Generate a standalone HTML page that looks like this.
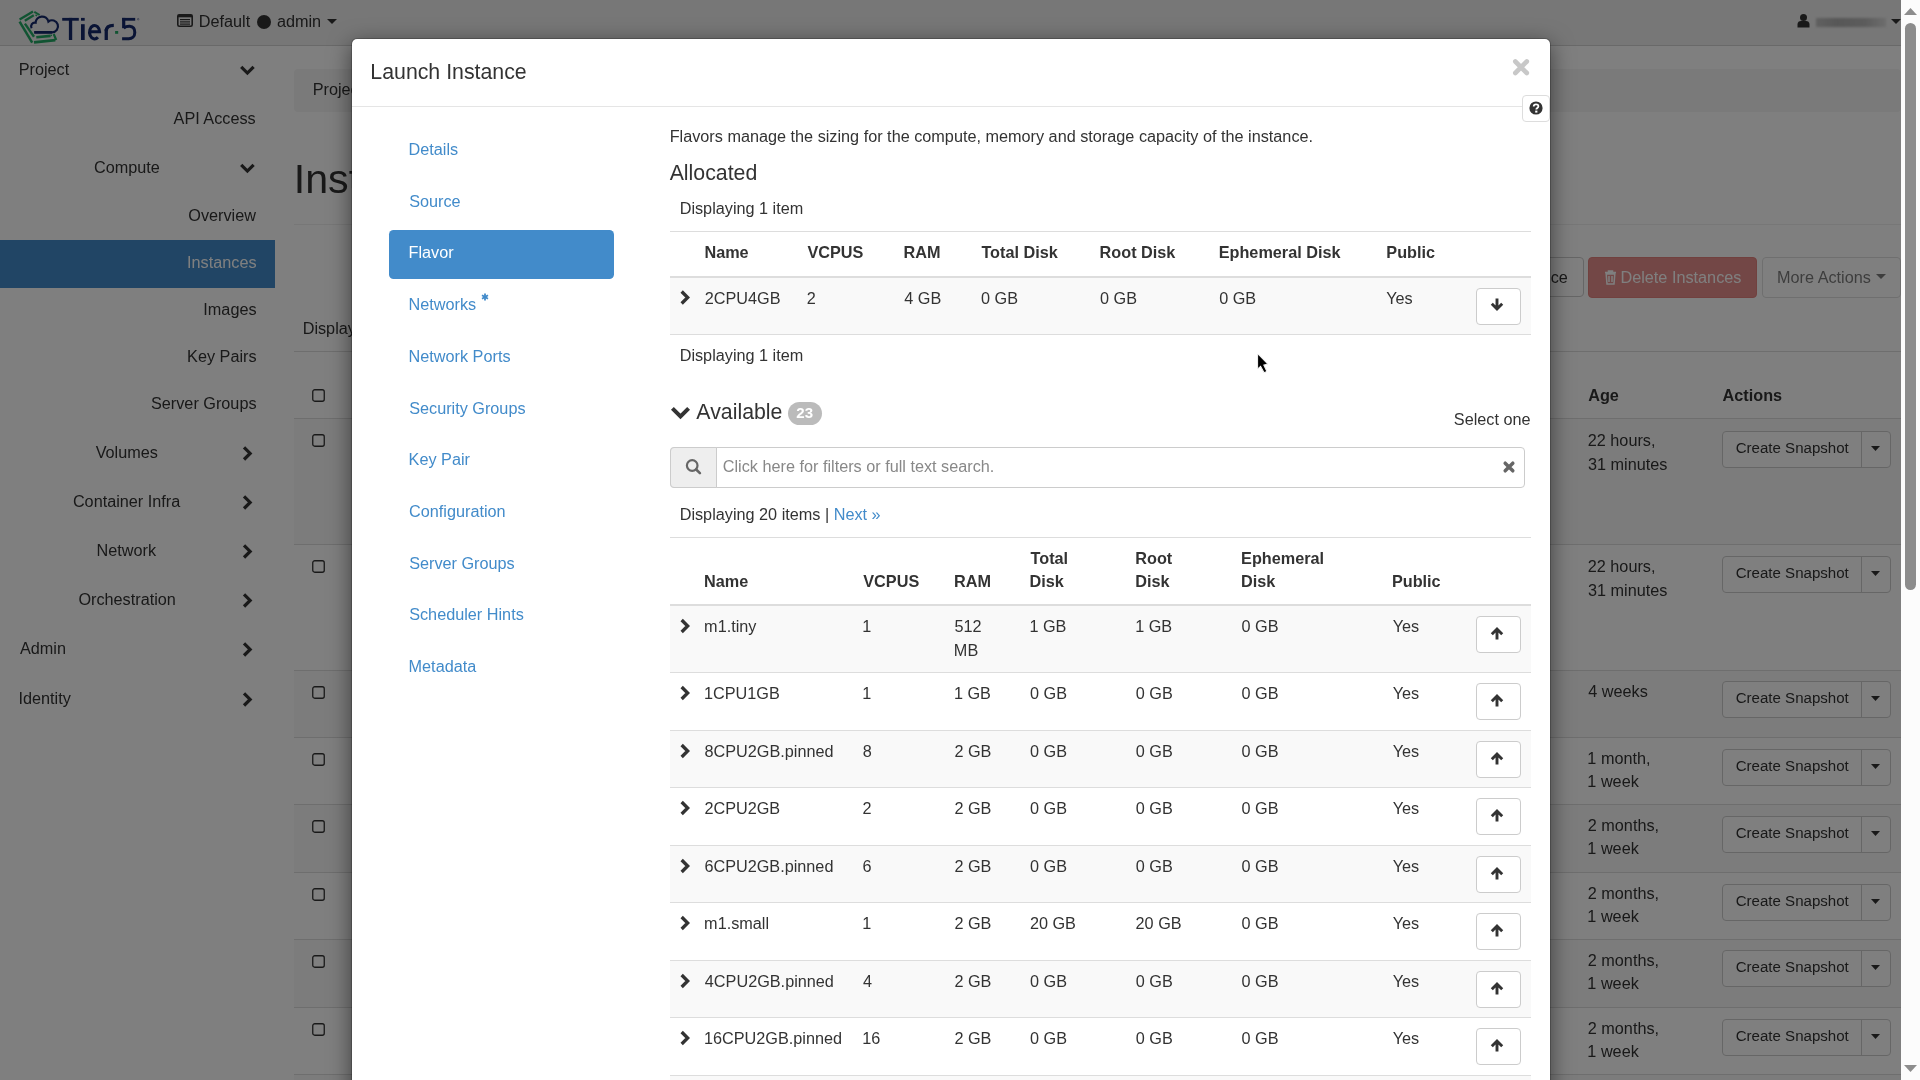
<!DOCTYPE html>
<html><head><meta charset="utf-8"><title>Launch Instance</title>
<style>
html,body{margin:0;padding:0;width:1920px;height:1080px;overflow:hidden;background:#fff}
body{position:relative;font-family:"Liberation Sans",sans-serif;color:#333}
.t{position:absolute;white-space:pre;font-family:"Liberation Sans",sans-serif}
#page,#modal{position:absolute;left:0;top:0;width:1920px;height:1080px;overflow:hidden;will-change:transform}
svg{display:block}
</style></head><body>
<div id="page"><div style="position:absolute;left:0px;top:0px;width:1901px;height:45px;background:#eeeeee"></div>
<div style="position:absolute;left:0px;top:45px;width:1901px;height:1px;background:#d2d2d2"></div>
<svg style="position:absolute;left:0px;top:0px" width="145" height="48" viewBox="0 0 145 48">
<g stroke="#22a864" stroke-linecap="butt" fill="none">
<line x1="19.6" y1="19.4" x2="33" y2="11.6" stroke-width="2.3"/>
<line x1="24.8" y1="20.8" x2="33.8" y2="15.3" stroke-width="2.2"/>
<line x1="34.3" y1="11.8" x2="39.7" y2="15.0" stroke-width="2.0"/>
<line x1="35.5" y1="14.8" x2="37.1" y2="15.8" stroke-width="1.4"/>
<line x1="19.6" y1="21.6" x2="32.2" y2="42.6" stroke-width="2.5"/>
<line x1="24.9" y1="23.6" x2="34.0" y2="36.8" stroke-width="2.4"/>
<line x1="36.3" y1="37.2" x2="50.6" y2="35.9" stroke-width="2.6"/>
<line x1="34" y1="42.4" x2="55.3" y2="40.2" stroke-width="2.7"/>
<line x1="53.7" y1="34" x2="56.2" y2="40" stroke-width="2.2"/>
</g>
<circle cx="51.3" cy="35.4" r="0.8" fill="#22a864"/>
<path d="M34.3,32.3 L52,32.3 A6,6 0 1 0 48.4,21.5 A6.5,6.5 0 0 0 35.6,22.6 A3.8,3.8 0 0 0 31.6,28.2" fill="none" stroke="#14286a" stroke-width="2.2"/>
<line x1="34.3" y1="32.3" x2="52" y2="32.3" stroke="#14286a" stroke-width="2.6"/>
<g fill="#14286a">
<rect x="62.2" y="17.9" width="16.6" height="2.8"/>
<rect x="68.9" y="17.9" width="3.3" height="22.1"/>
<rect x="81" y="17.9" width="3.7" height="2.8"/>
<rect x="81" y="24.2" width="3.7" height="15.8"/>
<rect x="104.6" y="29" width="3.3" height="11"/>
<rect x="122.1" y="17.9" width="13.1" height="2.8"/>
<rect x="122.1" y="17.9" width="3.2" height="10.3"/>
</g>
<g fill="none" stroke="#14286a">
<path d="M89.5,31.7 H99.6 A5.05,6.7 0 1 0 97.9,37.2" stroke-width="3"/>
<path d="M106.25,31 Q106.25,25.3 113.8,25.3" stroke-width="3.3"/>
<path d="M123.7,28 C125.5,26.6 127.8,26.2 129.8,26.3 C133.6,26.6 134.8,29.6 134.8,32.6 C134.8,36.8 131.9,38.7 128.8,38.7 L122.1,38.7" stroke-width="3"/>
</g>
<rect x="115.1" y="31" width="3.1" height="2.8" fill="#22a864"/>
<circle cx="138.2" cy="19.2" r="0.8" fill="none" stroke="#14286a" stroke-width="0.4"/>
</svg>
<svg style="position:absolute;left:177px;top:14px" width="16" height="13" viewBox="0 0 16 13"><rect x="0.8" y="0.8" width="14.4" height="11.4" rx="1.5" fill="none" stroke="#333" stroke-width="1.6"/><rect x="0.8" y="0.8" width="14.4" height="2.5" fill="#333"/><rect x="3" y="5" width="10" height="1.2" fill="#333"/><rect x="3" y="7.3" width="10" height="1.2" fill="#333"/><rect x="3" y="9.5" width="10" height="1.2" fill="#333"/></svg>
<div class="t" style="left:198.77px;top:9px;font-size:16.24px;line-height:24px;color:#333;">Default</div>
<div style="position:absolute;left:257px;top:15px;width:14px;height:14px;background:#333;border-radius:50%"></div>
<div class="t" style="left:276.91px;top:9px;font-size:16.24px;line-height:24px;color:#333;">admin</div>
<svg style="position:absolute;left:327px;top:19px" width="10" height="5" viewBox="0 0 10 5"><polygon points="0,0 10,0 5,5" fill="#333"/></svg>
<svg style="position:absolute;left:1797px;top:14px" width="13" height="14" viewBox="0 0 13 14"><circle cx="6.5" cy="3.6" r="3.5" fill="#333"/><path d="M0.5,13.5 L0.5,10.5 C0.5,8 2,7 4,7 L9,7 C11,7 12.5,8 12.5,10.5 L12.5,13.5 Z" fill="#333"/></svg>
<div style="position:absolute;left:1816px;top:18px;width:70px;height:9px;background:linear-gradient(90deg,#bdbdbd,#a9a9a9 30%,#b3b3b3 70%,#d9d9d9);filter:blur(1.2px);opacity:.9"></div>
<svg style="position:absolute;left:1891px;top:19px" width="10" height="5" viewBox="0 0 10 5"><polygon points="0,0 10,0 5,5" fill="#333"/></svg>
<div style="position:absolute;left:0px;top:240px;width:275px;height:48px;background:#428bca"></div>
<div class="t" style="left:18.67px;top:57px;font-size:16.24px;line-height:24px;color:#333;">Project</div>
<div class="t" style="left:173.56px;top:106px;font-size:16.24px;line-height:24px;color:#333;">API Access</div>
<div class="t" style="left:94.00px;top:155px;font-size:16.24px;line-height:24px;color:#333;">Compute</div>
<div class="t" style="left:188.28px;top:203px;font-size:16.24px;line-height:24px;color:#333;">Overview</div>
<div class="t" style="left:187.08px;top:250px;font-size:16.24px;line-height:24px;color:#fff;">Instances</div>
<div class="t" style="left:203.33px;top:297px;font-size:16.24px;line-height:24px;color:#333;">Images</div>
<div class="t" style="left:187.09px;top:344px;font-size:16.24px;line-height:24px;color:#333;">Key Pairs</div>
<div class="t" style="left:150.99px;top:391px;font-size:16.24px;line-height:24px;color:#333;">Server Groups</div>
<div class="t" style="left:95.67px;top:440px;font-size:16.24px;line-height:24px;color:#333;">Volumes</div>
<div class="t" style="left:72.88px;top:489px;font-size:16.24px;line-height:24px;color:#333;">Container Infra</div>
<div class="t" style="left:96.54px;top:538px;font-size:16.24px;line-height:24px;color:#333;">Network</div>
<div class="t" style="left:78.40px;top:587px;font-size:16.24px;line-height:24px;color:#333;">Orchestration</div>
<div class="t" style="left:19.97px;top:636px;font-size:16.24px;line-height:24px;color:#333;">Admin</div>
<div class="t" style="left:18.50px;top:686px;font-size:16.24px;line-height:24px;color:#333;">Identity</div>
<svg style="position:absolute;left:237px;top:62px" width="21" height="16" viewBox="0 0 21 16"><polyline points="4.20,4.83 10.40,11.03 16.60,4.83" fill="none" stroke="#333" stroke-width="3.2" stroke-linejoin="miter" stroke-linecap="butt"/></svg>
<svg style="position:absolute;left:237px;top:160px" width="21" height="16" viewBox="0 0 21 16"><polyline points="4.20,4.83 10.40,11.03 16.60,4.83" fill="none" stroke="#333" stroke-width="3.2" stroke-linejoin="miter" stroke-linecap="butt"/></svg>
<svg style="position:absolute;left:239px;top:443px" width="16" height="21" viewBox="0 0 16 21"><polyline points="5.03,4.30 11.13,10.40 5.03,16.50" fill="none" stroke="#333" stroke-width="3.2" stroke-linejoin="miter" stroke-linecap="butt"/></svg>
<svg style="position:absolute;left:239px;top:492px" width="16" height="21" viewBox="0 0 16 21"><polyline points="5.03,4.30 11.13,10.40 5.03,16.50" fill="none" stroke="#333" stroke-width="3.2" stroke-linejoin="miter" stroke-linecap="butt"/></svg>
<svg style="position:absolute;left:239px;top:541px" width="16" height="21" viewBox="0 0 16 21"><polyline points="5.03,4.30 11.13,10.40 5.03,16.50" fill="none" stroke="#333" stroke-width="3.2" stroke-linejoin="miter" stroke-linecap="butt"/></svg>
<svg style="position:absolute;left:239px;top:590px" width="16" height="21" viewBox="0 0 16 21"><polyline points="5.03,4.30 11.13,10.40 5.03,16.50" fill="none" stroke="#333" stroke-width="3.2" stroke-linejoin="miter" stroke-linecap="butt"/></svg>
<svg style="position:absolute;left:239px;top:639px" width="16" height="21" viewBox="0 0 16 21"><polyline points="5.03,4.30 11.13,10.40 5.03,16.50" fill="none" stroke="#333" stroke-width="3.2" stroke-linejoin="miter" stroke-linecap="butt"/></svg>
<svg style="position:absolute;left:239px;top:689px" width="16" height="21" viewBox="0 0 16 21"><polyline points="5.03,4.30 11.13,10.40 5.03,16.50" fill="none" stroke="#333" stroke-width="3.2" stroke-linejoin="miter" stroke-linecap="butt"/></svg>
<div style="position:absolute;left:294px;top:69px;width:1607px;height:43px;background:#f5f5f5;border-radius:4px"></div>
<div class="t" style="left:312.67px;top:77px;font-size:16.24px;line-height:24px;color:#333;">Project / Compute / Instances</div>
<div class="t" style="left:293.70px;top:148px;font-size:41.2px;line-height:62px;color:#333;">Instances</div>
<div style="position:absolute;left:294px;top:224px;width:1607px;height:1px;background:#eee"></div>
<div style="position:absolute;left:1420px;top:257px;width:163.75px;height:40px;border:1px solid #ccc;border-radius:4px;background:#fff;box-sizing:border-box"></div>
<div class="t" style="left:1448.74px;top:265px;font-size:16.24px;line-height:24px;color:#333;">Launch Instance</div>
<div style="position:absolute;left:1588px;top:257px;width:169px;height:41px;background:#d9534f;border:1px solid #d43f3a;border-radius:4px;box-sizing:border-box;opacity:.65"></div>
<svg style="position:absolute;left:1604px;top:270px" width="13" height="15" viewBox="0 0 13 15"><path d="M1,2.5 H12 M4.5,2.5 V1 H8.5 V2.5 M2.2,4 L3,14 H10 L10.8,4 Z M5,6 V12 M8,6 V12" fill="none" stroke="#fff" stroke-width="1.5"/></svg>
<div class="t" style="left:1620.47px;top:265px;font-size:16.24px;line-height:24px;color:#fff;">Delete Instances</div>
<div style="position:absolute;left:1762px;top:257px;width:139px;height:41px;border:1px solid #ccc;border-radius:4px;background:#fff;box-sizing:border-box;opacity:.65"></div>
<div class="t" style="left:1777.07px;top:265px;font-size:16.24px;line-height:24px;color:rgba(51,51,51,.65);">More Actions</div>
<svg style="position:absolute;left:1876px;top:274px" width="10" height="5" viewBox="0 0 10 5"><polygon points="0,0 10,0 5,5" fill="#333" opacity=".65"/></svg>
<div class="t" style="left:302.67px;top:316px;font-size:16.24px;line-height:24px;color:#333;">Displaying 10 items</div>
<div style="position:absolute;left:294px;top:351px;width:1607px;height:1px;background:#ddd"></div>
<svg style="position:absolute;left:312px;top:389px" width="13" height="13" viewBox="0 0 13 13"><rect x="0.75" y="0.75" width="11.5" height="11.5" rx="2" fill="#fff" stroke="#333" stroke-width="1.3"/></svg>
<div class="t" style="left:1588.20px;top:383px;font-size:16.24px;line-height:24px;font-weight:700;color:#333;">Age</div>
<div class="t" style="left:1722.60px;top:383px;font-size:16.24px;line-height:24px;font-weight:700;color:#333;">Actions</div>
<div style="position:absolute;left:294px;top:418px;width:1607px;height:2px;background:#ddd"></div>
<div style="position:absolute;left:294px;top:419px;width:1607px;height:125px;background:#f9f9f9"></div>
<div style="position:absolute;left:294px;top:544px;width:1607px;height:1px;background:#ddd"></div>
<svg style="position:absolute;left:312px;top:434px" width="13" height="13" viewBox="0 0 13 13"><rect x="0.75" y="0.75" width="11.5" height="11.5" rx="2" fill="#fff" stroke="#333" stroke-width="1.3"/></svg>
<div class="t" style="left:1587.78px;top:428px;font-size:16.24px;line-height:24px;color:#333;">22 hours,</div>
<div class="t" style="left:1587.98px;top:452px;font-size:16.24px;line-height:24px;color:#333;">31 minutes</div>
<div style="position:absolute;left:1722px;top:431px;width:169px;height:37px;border:1px solid #ccc;border-radius:4px;background:#fff;box-sizing:border-box"></div>
<div style="position:absolute;left:1861px;top:431px;width:1px;height:37px;background:#ccc"></div>
<div class="t" style="left:1735.63px;top:436px;font-size:15.08px;line-height:23px;color:#333;">Create Snapshot</div>
<svg style="position:absolute;left:1871px;top:446px" width="9" height="5" viewBox="0 0 9 5"><polygon points="0,0 9,0 4.5,5" fill="#333"/></svg>
<div style="position:absolute;left:294px;top:670px;width:1607px;height:1px;background:#ddd"></div>
<svg style="position:absolute;left:312px;top:560px" width="13" height="13" viewBox="0 0 13 13"><rect x="0.75" y="0.75" width="11.5" height="11.5" rx="2" fill="#fff" stroke="#333" stroke-width="1.3"/></svg>
<div class="t" style="left:1587.78px;top:554px;font-size:16.24px;line-height:24px;color:#333;">22 hours,</div>
<div class="t" style="left:1587.98px;top:578px;font-size:16.24px;line-height:24px;color:#333;">31 minutes</div>
<div style="position:absolute;left:1722px;top:556px;width:169px;height:37px;border:1px solid #ccc;border-radius:4px;background:#fff;box-sizing:border-box"></div>
<div style="position:absolute;left:1861px;top:556px;width:1px;height:37px;background:#ccc"></div>
<div class="t" style="left:1735.63px;top:561px;font-size:15.08px;line-height:23px;color:#333;">Create Snapshot</div>
<svg style="position:absolute;left:1871px;top:571px" width="9" height="5" viewBox="0 0 9 5"><polygon points="0,0 9,0 4.5,5" fill="#333"/></svg>
<div style="position:absolute;left:294px;top:671px;width:1607px;height:66px;background:#f9f9f9"></div>
<div style="position:absolute;left:294px;top:737px;width:1607px;height:1px;background:#ddd"></div>
<svg style="position:absolute;left:312px;top:686px" width="13" height="13" viewBox="0 0 13 13"><rect x="0.75" y="0.75" width="11.5" height="11.5" rx="2" fill="#fff" stroke="#333" stroke-width="1.3"/></svg>
<div class="t" style="left:1588.23px;top:679px;font-size:16.24px;line-height:24px;color:#333;">4 weeks</div>
<div style="position:absolute;left:1722px;top:681px;width:169px;height:37px;border:1px solid #ccc;border-radius:4px;background:#fff;box-sizing:border-box"></div>
<div style="position:absolute;left:1861px;top:681px;width:1px;height:37px;background:#ccc"></div>
<div class="t" style="left:1735.63px;top:686px;font-size:15.08px;line-height:23px;color:#333;">Create Snapshot</div>
<svg style="position:absolute;left:1871px;top:696px" width="9" height="5" viewBox="0 0 9 5"><polygon points="0,0 9,0 4.5,5" fill="#333"/></svg>
<div style="position:absolute;left:294px;top:804px;width:1607px;height:1px;background:#ddd"></div>
<svg style="position:absolute;left:312px;top:753px" width="13" height="13" viewBox="0 0 13 13"><rect x="0.75" y="0.75" width="11.5" height="11.5" rx="2" fill="#fff" stroke="#333" stroke-width="1.3"/></svg>
<div class="t" style="left:1587.36px;top:746px;font-size:16.24px;line-height:24px;color:#333;">1 month,</div>
<div class="t" style="left:1587.36px;top:769px;font-size:16.24px;line-height:24px;color:#333;">1 week</div>
<div style="position:absolute;left:1722px;top:749px;width:169px;height:37px;border:1px solid #ccc;border-radius:4px;background:#fff;box-sizing:border-box"></div>
<div style="position:absolute;left:1861px;top:749px;width:1px;height:37px;background:#ccc"></div>
<div class="t" style="left:1735.63px;top:754px;font-size:15.08px;line-height:23px;color:#333;">Create Snapshot</div>
<svg style="position:absolute;left:1871px;top:764px" width="9" height="5" viewBox="0 0 9 5"><polygon points="0,0 9,0 4.5,5" fill="#333"/></svg>
<div style="position:absolute;left:294px;top:805px;width:1607px;height:67px;background:#f9f9f9"></div>
<div style="position:absolute;left:294px;top:872px;width:1607px;height:1px;background:#ddd"></div>
<svg style="position:absolute;left:312px;top:820px" width="13" height="13" viewBox="0 0 13 13"><rect x="0.75" y="0.75" width="11.5" height="11.5" rx="2" fill="#fff" stroke="#333" stroke-width="1.3"/></svg>
<div class="t" style="left:1587.78px;top:813px;font-size:16.24px;line-height:24px;color:#333;">2 months,</div>
<div class="t" style="left:1587.36px;top:836px;font-size:16.24px;line-height:24px;color:#333;">1 week</div>
<div style="position:absolute;left:1722px;top:816px;width:169px;height:37px;border:1px solid #ccc;border-radius:4px;background:#fff;box-sizing:border-box"></div>
<div style="position:absolute;left:1861px;top:816px;width:1px;height:37px;background:#ccc"></div>
<div class="t" style="left:1735.63px;top:821px;font-size:15.08px;line-height:23px;color:#333;">Create Snapshot</div>
<svg style="position:absolute;left:1871px;top:831px" width="9" height="5" viewBox="0 0 9 5"><polygon points="0,0 9,0 4.5,5" fill="#333"/></svg>
<div style="position:absolute;left:294px;top:939px;width:1607px;height:1px;background:#ddd"></div>
<svg style="position:absolute;left:312px;top:888px" width="13" height="13" viewBox="0 0 13 13"><rect x="0.75" y="0.75" width="11.5" height="11.5" rx="2" fill="#fff" stroke="#333" stroke-width="1.3"/></svg>
<div class="t" style="left:1587.78px;top:881px;font-size:16.24px;line-height:24px;color:#333;">2 months,</div>
<div class="t" style="left:1587.36px;top:904px;font-size:16.24px;line-height:24px;color:#333;">1 week</div>
<div style="position:absolute;left:1722px;top:884px;width:169px;height:37px;border:1px solid #ccc;border-radius:4px;background:#fff;box-sizing:border-box"></div>
<div style="position:absolute;left:1861px;top:884px;width:1px;height:37px;background:#ccc"></div>
<div class="t" style="left:1735.63px;top:889px;font-size:15.08px;line-height:23px;color:#333;">Create Snapshot</div>
<svg style="position:absolute;left:1871px;top:899px" width="9" height="5" viewBox="0 0 9 5"><polygon points="0,0 9,0 4.5,5" fill="#333"/></svg>
<div style="position:absolute;left:294px;top:940px;width:1607px;height:67px;background:#f9f9f9"></div>
<div style="position:absolute;left:294px;top:1007px;width:1607px;height:1px;background:#ddd"></div>
<svg style="position:absolute;left:312px;top:955px" width="13" height="13" viewBox="0 0 13 13"><rect x="0.75" y="0.75" width="11.5" height="11.5" rx="2" fill="#fff" stroke="#333" stroke-width="1.3"/></svg>
<div class="t" style="left:1587.78px;top:948px;font-size:16.24px;line-height:24px;color:#333;">2 months,</div>
<div class="t" style="left:1587.36px;top:971px;font-size:16.24px;line-height:24px;color:#333;">1 week</div>
<div style="position:absolute;left:1722px;top:950px;width:169px;height:37px;border:1px solid #ccc;border-radius:4px;background:#fff;box-sizing:border-box"></div>
<div style="position:absolute;left:1861px;top:950px;width:1px;height:37px;background:#ccc"></div>
<div class="t" style="left:1735.63px;top:955px;font-size:15.08px;line-height:23px;color:#333;">Create Snapshot</div>
<svg style="position:absolute;left:1871px;top:965px" width="9" height="5" viewBox="0 0 9 5"><polygon points="0,0 9,0 4.5,5" fill="#333"/></svg>
<div style="position:absolute;left:294px;top:1074px;width:1607px;height:1px;background:#ddd"></div>
<svg style="position:absolute;left:312px;top:1023px" width="13" height="13" viewBox="0 0 13 13"><rect x="0.75" y="0.75" width="11.5" height="11.5" rx="2" fill="#fff" stroke="#333" stroke-width="1.3"/></svg>
<div class="t" style="left:1587.78px;top:1016px;font-size:16.24px;line-height:24px;color:#333;">2 months,</div>
<div class="t" style="left:1587.36px;top:1039px;font-size:16.24px;line-height:24px;color:#333;">1 week</div>
<div style="position:absolute;left:1722px;top:1019px;width:169px;height:37px;border:1px solid #ccc;border-radius:4px;background:#fff;box-sizing:border-box"></div>
<div style="position:absolute;left:1861px;top:1019px;width:1px;height:37px;background:#ccc"></div>
<div class="t" style="left:1735.63px;top:1024px;font-size:15.08px;line-height:23px;color:#333;">Create Snapshot</div>
<svg style="position:absolute;left:1871px;top:1034px" width="9" height="5" viewBox="0 0 9 5"><polygon points="0,0 9,0 4.5,5" fill="#333"/></svg>
<div style="position:absolute;left:294px;top:1075px;width:1607px;height:125px;background:#f9f9f9"></div>
<div style="position:absolute;left:294px;top:1200px;width:1607px;height:1px;background:#ddd"></div>
<svg style="position:absolute;left:312px;top:1090px" width="13" height="13" viewBox="0 0 13 13"><rect x="0.75" y="0.75" width="11.5" height="11.5" rx="2" fill="#fff" stroke="#333" stroke-width="1.3"/></svg>
</div><div style="position:absolute;left:0px;top:0px;width:1901px;height:1080px;background:rgba(0,0,0,.5)"></div>
<div style="position:absolute;left:1901px;top:0px;width:19px;height:1080px;background:#fcfcfc"></div>
<svg style="position:absolute;left:1904px;top:8px" width="13" height="7" viewBox="0 0 13 7"><polygon points="0,7 13,7 6.5,0" fill="#8d8d8d"/></svg>
<div style="position:absolute;left:1905px;top:23px;width:11px;height:567px;background:#8c8c8c;border-radius:5.5px"></div>
<svg style="position:absolute;left:1904px;top:1065px" width="13" height="7" viewBox="0 0 13 7"><polygon points="0,0 13,0 6.5,7" fill="#8d8d8d"/></svg>
<div id="modal"><div style="position:absolute;left:351px;top:38px;width:1200px;height:1100px;background:#fff;background-clip:padding-box;border:1px solid rgba(0,0,0,.2);border-radius:6px;box-shadow:0 6px 22px rgba(0,0,0,.5);box-sizing:border-box"></div>
<div class="t" style="left:370.35px;top:56px;font-size:21.3px;line-height:32px;color:#333;">Launch Instance</div>
<svg style="position:absolute;left:1511px;top:58px" width="20" height="19" viewBox="0 0 20 19"><path d="M4.3,3.5 L15.8,15 M15.8,3.5 L4.3,15" stroke="#c8c8c8" stroke-width="4.6" stroke-linecap="round"/></svg>
<div style="position:absolute;left:352px;top:106px;width:1170px;height:1px;background:#e5e5e5"></div>
<div style="position:absolute;left:1522px;top:95px;width:28px;height:27px;background:#fff;border:1px solid #ddd;border-radius:4px;box-sizing:border-box"></div>
<svg style="position:absolute;left:1529px;top:101px" width="14" height="14" viewBox="0 0 14 14"><circle cx="7" cy="7" r="6.6" fill="#333"/><path d="M4.7,5.4 C4.7,2.6 9.4,2.6 9.4,5.3 C9.4,7 7.3,7 7.3,8.6" fill="none" stroke="#fff" stroke-width="1.8"/><rect x="6.2" y="9.6" width="2.2" height="2" fill="#fff"/></svg>
<div style="position:absolute;left:389.3px;top:230px;width:224.4px;height:48.7px;background:#428bca;border-radius:4.6px"></div>
<div class="t" style="left:408.57px;top:137px;font-size:16.24px;line-height:24px;color:#428bca;">Details</div>
<div class="t" style="left:409.16px;top:189px;font-size:16.24px;line-height:24px;color:#428bca;">Source</div>
<div class="t" style="left:408.57px;top:240px;font-size:16.24px;line-height:24px;color:#fff;">Flavor</div>
<div class="t" style="left:408.57px;top:292px;font-size:16.24px;line-height:24px;color:#428bca;">Networks</div>
<div class="t" style="left:408.57px;top:344px;font-size:16.24px;line-height:24px;color:#428bca;">Network Ports</div>
<div class="t" style="left:409.16px;top:396px;font-size:16.24px;line-height:24px;color:#428bca;">Security Groups</div>
<div class="t" style="left:408.57px;top:447px;font-size:16.24px;line-height:24px;color:#428bca;">Key Pair</div>
<div class="t" style="left:409.08px;top:499px;font-size:16.24px;line-height:24px;color:#428bca;">Configuration</div>
<div class="t" style="left:409.16px;top:551px;font-size:16.24px;line-height:24px;color:#428bca;">Server Groups</div>
<div class="t" style="left:409.16px;top:602px;font-size:16.24px;line-height:24px;color:#428bca;">Scheduler Hints</div>
<div class="t" style="left:408.57px;top:654px;font-size:16.24px;line-height:24px;color:#428bca;">Metadata</div>
<svg style="position:absolute;left:481.3px;top:293.2px" width="8" height="8" viewBox="0 0 8 8"><g stroke="#428bca" stroke-width="1.8"><line x1="4" y1="0.5" x2="4" y2="7.5"/><line x1="1" y1="2.2" x2="7" y2="5.8"/><line x1="7" y1="2.2" x2="1" y2="5.8"/></g></svg>
<div class="t" style="left:669.67px;top:124px;font-size:16.24px;line-height:24px;color:#333;">Flavors manage the sizing for the compute, memory and storage capacity of the instance.</div>
<div class="t" style="left:669.66px;top:157px;font-size:21.3px;line-height:32px;color:#333;">Allocated</div>
<div class="t" style="left:679.67px;top:196px;font-size:16.24px;line-height:24px;color:#333;">Displaying 1 item</div>
<div style="position:absolute;left:670px;top:231px;width:861px;height:1px;background:#ddd"></div>
<div class="t" style="left:704.41px;top:240px;font-size:16.24px;line-height:24px;font-weight:700;color:#333;">Name</div>
<div class="t" style="left:807.49px;top:240px;font-size:16.24px;line-height:24px;font-weight:700;color:#333;">VCPUS</div>
<div class="t" style="left:903.51px;top:240px;font-size:16.24px;line-height:24px;font-weight:700;color:#333;">RAM</div>
<div class="t" style="left:981.42px;top:240px;font-size:16.24px;line-height:24px;font-weight:700;color:#333;">Total Disk</div>
<div class="t" style="left:1099.61px;top:240px;font-size:16.24px;line-height:24px;font-weight:700;color:#333;">Root Disk</div>
<div class="t" style="left:1218.71px;top:240px;font-size:16.24px;line-height:24px;font-weight:700;color:#333;">Ephemeral Disk</div>
<div class="t" style="left:1386.31px;top:240px;font-size:16.24px;line-height:24px;font-weight:700;color:#333;">Public</div>
<div style="position:absolute;left:670px;top:276px;width:861px;height:2px;background:#ddd"></div>
<div style="position:absolute;left:670px;top:278px;width:861px;height:56px;background:#f9f9f9"></div>
<div style="position:absolute;left:670px;top:334px;width:861px;height:1px;background:#ddd"></div>
<svg style="position:absolute;left:677px;top:287px" width="15" height="21" viewBox="0 0 15 21"><polyline points="4.67,4.50 10.67,10.50 4.67,16.50" fill="none" stroke="#333" stroke-width="3.3" stroke-linejoin="miter" stroke-linecap="butt"/></svg>
<div class="t" style="left:704.68px;top:286px;font-size:16.24px;line-height:24px;color:#333;">2CPU4GB</div>
<div class="t" style="left:806.78px;top:286px;font-size:16.24px;line-height:24px;color:#333;">2</div>
<div class="t" style="left:904.23px;top:286px;font-size:16.24px;line-height:24px;color:#333;">4 GB</div>
<div class="t" style="left:980.97px;top:286px;font-size:16.24px;line-height:24px;color:#333;">0 GB</div>
<div class="t" style="left:1100.07px;top:286px;font-size:16.24px;line-height:24px;color:#333;">0 GB</div>
<div class="t" style="left:1219.17px;top:286px;font-size:16.24px;line-height:24px;color:#333;">0 GB</div>
<div class="t" style="left:1386.24px;top:286px;font-size:16.24px;line-height:24px;color:#333;">Yes</div>
<div style="position:absolute;left:1476px;top:288px;width:45px;height:37px;background:#fff;border:1px solid #ccc;border-radius:4px;box-sizing:border-box"></div>
<svg style="position:absolute;left:1489.5px;top:298px" width="14" height="14" viewBox="0 0 14 14"><path d="M7,0.5 V10.5 M1.8,5.8 L7,11 L12.2,5.8" fill="none" stroke="#333" stroke-width="2.9" stroke-linejoin="miter"/></svg>
<div class="t" style="left:679.67px;top:343px;font-size:16.24px;line-height:24px;color:#333;">Displaying 1 item</div>
<svg style="position:absolute;left:667px;top:403px" width="27" height="19" viewBox="0 0 27 19"><polyline points="5.40,5.31 13.50,13.41 21.60,5.31" fill="none" stroke="#333" stroke-width="4.0" stroke-linejoin="miter" stroke-linecap="butt"/></svg>
<div class="t" style="left:696.36px;top:396px;font-size:21.3px;line-height:32px;color:#333;">Available</div>
<div style="position:absolute;left:788px;top:402px;width:34px;height:23px;background:#bbb;border-radius:11.5px"></div>
<div class="t" style="left:796.28px;top:401px;font-size:15.08px;line-height:23px;font-weight:700;color:#fff;">23</div>
<div class="t" style="left:1453.86px;top:407px;font-size:16.24px;line-height:24px;color:#333;">Select one</div>
<div style="position:absolute;left:670px;top:447px;width:855px;height:41px;border:1px solid #ccc;border-radius:4px;background:#fff;box-sizing:border-box"></div>
<div style="position:absolute;left:670px;top:447px;width:47px;height:41px;border:1px solid #ccc;border-radius:4px 0 0 4px;background:#eee;box-sizing:border-box"></div>
<svg style="position:absolute;left:684px;top:457px" width="20" height="20" viewBox="0 0 20 20"><circle cx="8.2" cy="8.5" r="5.3" fill="none" stroke="#666" stroke-width="2.2"/><line x1="12.2" y1="12.5" x2="15.9" y2="16.1" stroke="#666" stroke-width="2.6" stroke-linecap="round"/></svg>
<div class="t" style="left:722.78px;top:454px;font-size:16.24px;line-height:24px;color:#888;">Click here for filters or full text search.</div>
<svg style="position:absolute;left:1502px;top:460px" width="14" height="14" viewBox="0 0 14 14"><path d="M3.2,3.2 L10.8,10.8 M10.8,3.2 L3.2,10.8" stroke="#666" stroke-width="3.5" stroke-linecap="round"/></svg>
<div class="t" style="left:679.67px;top:502px;font-size:16.24px;line-height:24px;color:#333;">Displaying 20 items | </div>
<div class="t" style="left:833.72px;top:502px;font-size:16.24px;line-height:24px;color:#428bca;">Next »</div>
<div style="position:absolute;left:670px;top:537px;width:861px;height:1px;background:#ddd"></div>
<div class="t" style="left:704.11px;top:569px;font-size:16.24px;line-height:24px;font-weight:700;color:#333;">Name</div>
<div class="t" style="left:863.29px;top:569px;font-size:16.24px;line-height:24px;font-weight:700;color:#333;">VCPUS</div>
<div class="t" style="left:954.11px;top:569px;font-size:16.24px;line-height:24px;font-weight:700;color:#333;">RAM</div>
<div class="t" style="left:1030.52px;top:546px;font-size:16.24px;line-height:24px;font-weight:700;color:#333;">Total</div>
<div class="t" style="left:1029.61px;top:569px;font-size:16.24px;line-height:24px;font-weight:700;color:#333;">Disk</div>
<div class="t" style="left:1135.31px;top:546px;font-size:16.24px;line-height:24px;font-weight:700;color:#333;">Root</div>
<div class="t" style="left:1135.31px;top:569px;font-size:16.24px;line-height:24px;font-weight:700;color:#333;">Disk</div>
<div class="t" style="left:1241.11px;top:546px;font-size:16.24px;line-height:24px;font-weight:700;color:#333;">Ephemeral</div>
<div class="t" style="left:1241.11px;top:569px;font-size:16.24px;line-height:24px;font-weight:700;color:#333;">Disk</div>
<div class="t" style="left:1391.91px;top:569px;font-size:16.24px;line-height:24px;font-weight:700;color:#333;">Public</div>
<div style="position:absolute;left:670px;top:604px;width:861px;height:2px;background:#ddd"></div>
<div style="position:absolute;left:670px;top:606px;width:861px;height:66px;background:#f9f9f9"></div>
<div style="position:absolute;left:670px;top:672px;width:861px;height:1px;background:#ddd"></div>
<svg style="position:absolute;left:677px;top:615px" width="15" height="22" viewBox="0 0 15 22"><polyline points="4.67,5.00 10.67,11.00 4.67,17.00" fill="none" stroke="#333" stroke-width="3.3" stroke-linejoin="miter" stroke-linecap="butt"/></svg>
<div class="t" style="left:704.12px;top:614px;font-size:16.24px;line-height:24px;color:#333;">m1.tiny</div>
<div class="t" style="left:862.16px;top:614px;font-size:16.24px;line-height:24px;color:#333;">1</div>
<div class="t" style="left:954.55px;top:614px;font-size:16.24px;line-height:24px;color:#333;">512</div>
<div class="t" style="left:953.87px;top:638px;font-size:16.24px;line-height:24px;color:#333;">MB</div>
<div class="t" style="left:1029.46px;top:614px;font-size:16.24px;line-height:24px;color:#333;">1 GB</div>
<div class="t" style="left:1135.16px;top:614px;font-size:16.24px;line-height:24px;color:#333;">1 GB</div>
<div class="t" style="left:1241.57px;top:614px;font-size:16.24px;line-height:24px;color:#333;">0 GB</div>
<div class="t" style="left:1392.64px;top:614px;font-size:16.24px;line-height:24px;color:#333;">Yes</div>
<div style="position:absolute;left:1476px;top:616px;width:45px;height:37px;background:#fff;border:1px solid #ccc;border-radius:4px;box-sizing:border-box"></div>
<svg style="position:absolute;left:1489.5px;top:626px" width="14" height="14" viewBox="0 0 14 14"><path d="M7,13.5 V3.5 M1.8,8.2 L7,3 L12.2,8.2" fill="none" stroke="#333" stroke-width="2.9" stroke-linejoin="miter"/></svg>
<div style="position:absolute;left:670px;top:730px;width:861px;height:1px;background:#ddd"></div>
<svg style="position:absolute;left:677px;top:682px" width="15" height="22" viewBox="0 0 15 22"><polyline points="4.67,5.00 10.67,11.00 4.67,17.00" fill="none" stroke="#333" stroke-width="3.3" stroke-linejoin="miter" stroke-linecap="butt"/></svg>
<div class="t" style="left:703.96px;top:681px;font-size:16.24px;line-height:24px;color:#333;">1CPU1GB</div>
<div class="t" style="left:862.16px;top:681px;font-size:16.24px;line-height:24px;color:#333;">1</div>
<div class="t" style="left:953.96px;top:681px;font-size:16.24px;line-height:24px;color:#333;">1 GB</div>
<div class="t" style="left:1030.07px;top:681px;font-size:16.24px;line-height:24px;color:#333;">0 GB</div>
<div class="t" style="left:1135.77px;top:681px;font-size:16.24px;line-height:24px;color:#333;">0 GB</div>
<div class="t" style="left:1241.57px;top:681px;font-size:16.24px;line-height:24px;color:#333;">0 GB</div>
<div class="t" style="left:1392.64px;top:681px;font-size:16.24px;line-height:24px;color:#333;">Yes</div>
<div style="position:absolute;left:1476px;top:683px;width:45px;height:37px;background:#fff;border:1px solid #ccc;border-radius:4px;box-sizing:border-box"></div>
<svg style="position:absolute;left:1489.5px;top:693px" width="14" height="14" viewBox="0 0 14 14"><path d="M7,13.5 V3.5 M1.8,8.2 L7,3 L12.2,8.2" fill="none" stroke="#333" stroke-width="2.9" stroke-linejoin="miter"/></svg>
<div style="position:absolute;left:670px;top:731px;width:861px;height:56px;background:#f9f9f9"></div>
<div style="position:absolute;left:670px;top:787px;width:861px;height:1px;background:#ddd"></div>
<svg style="position:absolute;left:677px;top:740px" width="15" height="22" viewBox="0 0 15 22"><polyline points="4.67,5.00 10.67,11.00 4.67,17.00" fill="none" stroke="#333" stroke-width="3.3" stroke-linejoin="miter" stroke-linecap="butt"/></svg>
<div class="t" style="left:704.49px;top:739px;font-size:16.24px;line-height:24px;color:#333;">8CPU2GB.pinned</div>
<div class="t" style="left:862.69px;top:739px;font-size:16.24px;line-height:24px;color:#333;">8</div>
<div class="t" style="left:954.38px;top:739px;font-size:16.24px;line-height:24px;color:#333;">2 GB</div>
<div class="t" style="left:1030.07px;top:739px;font-size:16.24px;line-height:24px;color:#333;">0 GB</div>
<div class="t" style="left:1135.77px;top:739px;font-size:16.24px;line-height:24px;color:#333;">0 GB</div>
<div class="t" style="left:1241.57px;top:739px;font-size:16.24px;line-height:24px;color:#333;">0 GB</div>
<div class="t" style="left:1392.64px;top:739px;font-size:16.24px;line-height:24px;color:#333;">Yes</div>
<div style="position:absolute;left:1476px;top:741px;width:45px;height:37px;background:#fff;border:1px solid #ccc;border-radius:4px;box-sizing:border-box"></div>
<svg style="position:absolute;left:1489.5px;top:751px" width="14" height="14" viewBox="0 0 14 14"><path d="M7,13.5 V3.5 M1.8,8.2 L7,3 L12.2,8.2" fill="none" stroke="#333" stroke-width="2.9" stroke-linejoin="miter"/></svg>
<div style="position:absolute;left:670px;top:845px;width:861px;height:1px;background:#ddd"></div>
<svg style="position:absolute;left:677px;top:797px" width="15" height="22" viewBox="0 0 15 22"><polyline points="4.67,5.00 10.67,11.00 4.67,17.00" fill="none" stroke="#333" stroke-width="3.3" stroke-linejoin="miter" stroke-linecap="butt"/></svg>
<div class="t" style="left:704.38px;top:796px;font-size:16.24px;line-height:24px;color:#333;">2CPU2GB</div>
<div class="t" style="left:862.58px;top:796px;font-size:16.24px;line-height:24px;color:#333;">2</div>
<div class="t" style="left:954.38px;top:796px;font-size:16.24px;line-height:24px;color:#333;">2 GB</div>
<div class="t" style="left:1030.07px;top:796px;font-size:16.24px;line-height:24px;color:#333;">0 GB</div>
<div class="t" style="left:1135.77px;top:796px;font-size:16.24px;line-height:24px;color:#333;">0 GB</div>
<div class="t" style="left:1241.57px;top:796px;font-size:16.24px;line-height:24px;color:#333;">0 GB</div>
<div class="t" style="left:1392.64px;top:796px;font-size:16.24px;line-height:24px;color:#333;">Yes</div>
<div style="position:absolute;left:1476px;top:798px;width:45px;height:37px;background:#fff;border:1px solid #ccc;border-radius:4px;box-sizing:border-box"></div>
<svg style="position:absolute;left:1489.5px;top:808px" width="14" height="14" viewBox="0 0 14 14"><path d="M7,13.5 V3.5 M1.8,8.2 L7,3 L12.2,8.2" fill="none" stroke="#333" stroke-width="2.9" stroke-linejoin="miter"/></svg>
<div style="position:absolute;left:670px;top:846px;width:861px;height:56px;background:#f9f9f9"></div>
<div style="position:absolute;left:670px;top:902px;width:861px;height:1px;background:#ddd"></div>
<svg style="position:absolute;left:677px;top:855px" width="15" height="22" viewBox="0 0 15 22"><polyline points="4.67,5.00 10.67,11.00 4.67,17.00" fill="none" stroke="#333" stroke-width="3.3" stroke-linejoin="miter" stroke-linecap="butt"/></svg>
<div class="t" style="left:704.38px;top:854px;font-size:16.24px;line-height:24px;color:#333;">6CPU2GB.pinned</div>
<div class="t" style="left:862.58px;top:854px;font-size:16.24px;line-height:24px;color:#333;">6</div>
<div class="t" style="left:954.38px;top:854px;font-size:16.24px;line-height:24px;color:#333;">2 GB</div>
<div class="t" style="left:1030.07px;top:854px;font-size:16.24px;line-height:24px;color:#333;">0 GB</div>
<div class="t" style="left:1135.77px;top:854px;font-size:16.24px;line-height:24px;color:#333;">0 GB</div>
<div class="t" style="left:1241.57px;top:854px;font-size:16.24px;line-height:24px;color:#333;">0 GB</div>
<div class="t" style="left:1392.64px;top:854px;font-size:16.24px;line-height:24px;color:#333;">Yes</div>
<div style="position:absolute;left:1476px;top:856px;width:45px;height:37px;background:#fff;border:1px solid #ccc;border-radius:4px;box-sizing:border-box"></div>
<svg style="position:absolute;left:1489.5px;top:866px" width="14" height="14" viewBox="0 0 14 14"><path d="M7,13.5 V3.5 M1.8,8.2 L7,3 L12.2,8.2" fill="none" stroke="#333" stroke-width="2.9" stroke-linejoin="miter"/></svg>
<div style="position:absolute;left:670px;top:960px;width:861px;height:1px;background:#ddd"></div>
<svg style="position:absolute;left:677px;top:912px" width="15" height="22" viewBox="0 0 15 22"><polyline points="4.67,5.00 10.67,11.00 4.67,17.00" fill="none" stroke="#333" stroke-width="3.3" stroke-linejoin="miter" stroke-linecap="butt"/></svg>
<div class="t" style="left:704.12px;top:911px;font-size:16.24px;line-height:24px;color:#333;">m1.small</div>
<div class="t" style="left:862.16px;top:911px;font-size:16.24px;line-height:24px;color:#333;">1</div>
<div class="t" style="left:954.38px;top:911px;font-size:16.24px;line-height:24px;color:#333;">2 GB</div>
<div class="t" style="left:1029.88px;top:911px;font-size:16.24px;line-height:24px;color:#333;">20 GB</div>
<div class="t" style="left:1135.58px;top:911px;font-size:16.24px;line-height:24px;color:#333;">20 GB</div>
<div class="t" style="left:1241.57px;top:911px;font-size:16.24px;line-height:24px;color:#333;">0 GB</div>
<div class="t" style="left:1392.64px;top:911px;font-size:16.24px;line-height:24px;color:#333;">Yes</div>
<div style="position:absolute;left:1476px;top:913px;width:45px;height:37px;background:#fff;border:1px solid #ccc;border-radius:4px;box-sizing:border-box"></div>
<svg style="position:absolute;left:1489.5px;top:923px" width="14" height="14" viewBox="0 0 14 14"><path d="M7,13.5 V3.5 M1.8,8.2 L7,3 L12.2,8.2" fill="none" stroke="#333" stroke-width="2.9" stroke-linejoin="miter"/></svg>
<div style="position:absolute;left:670px;top:961px;width:861px;height:56px;background:#f9f9f9"></div>
<div style="position:absolute;left:670px;top:1017px;width:861px;height:1px;background:#ddd"></div>
<svg style="position:absolute;left:677px;top:970px" width="15" height="22" viewBox="0 0 15 22"><polyline points="4.67,5.00 10.67,11.00 4.67,17.00" fill="none" stroke="#333" stroke-width="3.3" stroke-linejoin="miter" stroke-linecap="butt"/></svg>
<div class="t" style="left:704.83px;top:969px;font-size:16.24px;line-height:24px;color:#333;">4CPU2GB.pinned</div>
<div class="t" style="left:863.03px;top:969px;font-size:16.24px;line-height:24px;color:#333;">4</div>
<div class="t" style="left:954.38px;top:969px;font-size:16.24px;line-height:24px;color:#333;">2 GB</div>
<div class="t" style="left:1030.07px;top:969px;font-size:16.24px;line-height:24px;color:#333;">0 GB</div>
<div class="t" style="left:1135.77px;top:969px;font-size:16.24px;line-height:24px;color:#333;">0 GB</div>
<div class="t" style="left:1241.57px;top:969px;font-size:16.24px;line-height:24px;color:#333;">0 GB</div>
<div class="t" style="left:1392.64px;top:969px;font-size:16.24px;line-height:24px;color:#333;">Yes</div>
<div style="position:absolute;left:1476px;top:971px;width:45px;height:37px;background:#fff;border:1px solid #ccc;border-radius:4px;box-sizing:border-box"></div>
<svg style="position:absolute;left:1489.5px;top:981px" width="14" height="14" viewBox="0 0 14 14"><path d="M7,13.5 V3.5 M1.8,8.2 L7,3 L12.2,8.2" fill="none" stroke="#333" stroke-width="2.9" stroke-linejoin="miter"/></svg>
<div style="position:absolute;left:670px;top:1075px;width:861px;height:1px;background:#ddd"></div>
<svg style="position:absolute;left:677px;top:1027px" width="15" height="22" viewBox="0 0 15 22"><polyline points="4.67,5.00 10.67,11.00 4.67,17.00" fill="none" stroke="#333" stroke-width="3.3" stroke-linejoin="miter" stroke-linecap="butt"/></svg>
<div class="t" style="left:703.96px;top:1026px;font-size:16.24px;line-height:24px;color:#333;">16CPU2GB.pinned</div>
<div class="t" style="left:862.16px;top:1026px;font-size:16.24px;line-height:24px;color:#333;">16</div>
<div class="t" style="left:954.38px;top:1026px;font-size:16.24px;line-height:24px;color:#333;">2 GB</div>
<div class="t" style="left:1030.07px;top:1026px;font-size:16.24px;line-height:24px;color:#333;">0 GB</div>
<div class="t" style="left:1135.77px;top:1026px;font-size:16.24px;line-height:24px;color:#333;">0 GB</div>
<div class="t" style="left:1241.57px;top:1026px;font-size:16.24px;line-height:24px;color:#333;">0 GB</div>
<div class="t" style="left:1392.64px;top:1026px;font-size:16.24px;line-height:24px;color:#333;">Yes</div>
<div style="position:absolute;left:1476px;top:1028px;width:45px;height:37px;background:#fff;border:1px solid #ccc;border-radius:4px;box-sizing:border-box"></div>
<svg style="position:absolute;left:1489.5px;top:1038px" width="14" height="14" viewBox="0 0 14 14"><path d="M7,13.5 V3.5 M1.8,8.2 L7,3 L12.2,8.2" fill="none" stroke="#333" stroke-width="2.9" stroke-linejoin="miter"/></svg>
<div style="position:absolute;left:670px;top:1076px;width:861px;height:57px;background:#f9f9f9"></div>
<div style="position:absolute;left:670px;top:1133px;width:861px;height:1px;background:#ddd"></div>
<svg style="position:absolute;left:677px;top:1085px" width="15" height="22" viewBox="0 0 15 22"><polyline points="4.67,5.00 10.67,11.00 4.67,17.00" fill="none" stroke="#333" stroke-width="3.3" stroke-linejoin="miter" stroke-linecap="butt"/></svg>
<div class="t" style="left:704.49px;top:1084px;font-size:16.24px;line-height:24px;color:#333;">8CPU4GB.pinned</div>
<div class="t" style="left:862.69px;top:1084px;font-size:16.24px;line-height:24px;color:#333;">8</div>
<div class="t" style="left:954.83px;top:1084px;font-size:16.24px;line-height:24px;color:#333;">4 GB</div>
<div class="t" style="left:1030.07px;top:1084px;font-size:16.24px;line-height:24px;color:#333;">0 GB</div>
<div class="t" style="left:1135.77px;top:1084px;font-size:16.24px;line-height:24px;color:#333;">0 GB</div>
<div class="t" style="left:1241.57px;top:1084px;font-size:16.24px;line-height:24px;color:#333;">0 GB</div>
<div class="t" style="left:1392.64px;top:1084px;font-size:16.24px;line-height:24px;color:#333;">Yes</div>
<div style="position:absolute;left:1476px;top:1086px;width:45px;height:37px;background:#fff;border:1px solid #ccc;border-radius:4px;box-sizing:border-box"></div>
<svg style="position:absolute;left:1489.5px;top:1096px" width="14" height="14" viewBox="0 0 14 14"><path d="M7,13.5 V3.5 M1.8,8.2 L7,3 L12.2,8.2" fill="none" stroke="#333" stroke-width="2.9" stroke-linejoin="miter"/></svg>
<svg style="position:absolute;left:1254px;top:351px" width="18" height="26" viewBox="0 0 18 26"><path d="M4.1,3.8 L4.1,16.9 L6.7,14.6 L10.3,21.1 L12.2,20.3 L9.1,13.8 L12.9,12.8 Z" fill="#000" stroke="#fff" stroke-width="1.6" stroke-linejoin="round" paint-order="stroke" style="filter:drop-shadow(0.3px 0.8px 0.7px rgba(0,0,0,.35))"/></svg>
</div>
</body></html>
